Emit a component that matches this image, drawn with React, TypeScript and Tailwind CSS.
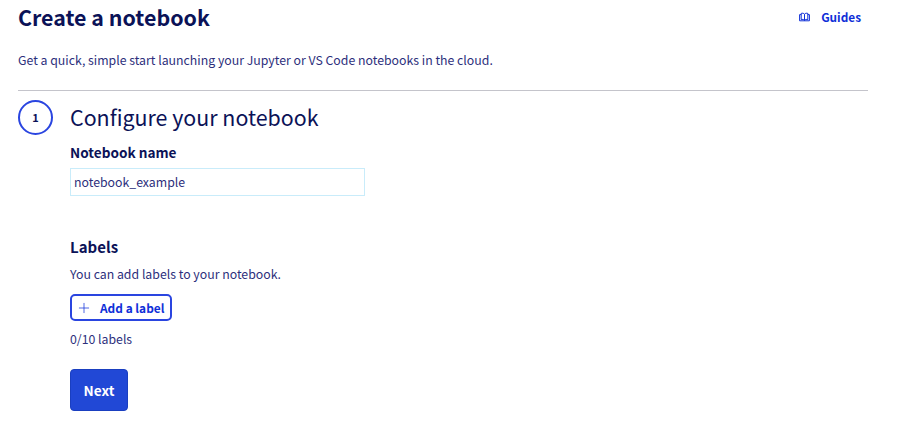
import { Plus } from "lucide-react";

const font = { fontFamily: '"Noto Sans CJK SC", "Noto Sans", sans-serif' };

function BookIcon() {
  return (
    <svg width="11" height="10" viewBox="0 0 11 10" fill="none" stroke="#0f2fd8" strokeWidth="1">
      <path d="M5.5 2.2C4.8 1.2 3.4 1 2.2 1.4V7.6C3.4 7.2 4.8 7.4 5.5 8.4C6.2 7.4 7.6 7.2 8.8 7.6V1.4C7.6 1 6.2 1.2 5.5 2.2ZM5.5 2.2V8.4" />
      <path d="M2.2 2.6H.6V8.8H10.4V2.6H8.8" />
    </svg>
  );
}

export default function App() {
  return (
    <div style={font} className="h-[422px] w-[900px] overflow-hidden bg-white pl-[18px] pr-[32px] text-[12.3px] text-[#2d2f7c]">
      <header className="flex items-start justify-between pt-[3px]">
        <h1 className="text-[21.4px] leading-[28px] font-bold text-[#0b1257]">Create a notebook</h1>
        <a className="mt-[5px] mr-[7px] flex items-center gap-[11px] text-[11.8px] leading-[17px] font-semibold text-[#0f2fd8]">
          <BookIcon />
          Guides
        </a>
      </header>

      <p className="mt-[20px] leading-[18px]">
        Get a quick, simple start launching your Jupyter or VS Code notebooks in the cloud.
      </p>

      <div className="mt-[21px] h-px bg-[#c4c4cb]" />

      <section className="mt-[9px] flex gap-[17px]">
        <div className="flex h-[35px] w-[35px] shrink-0 items-center justify-center rounded-full border-2 border-[#2a45e0] text-[11px] font-bold text-[#0b1257]">
          1
        </div>
        <div className="flex-1">
          <h2 className="text-[21.4px] leading-[34px] font-normal text-[#0b1257]">Configure your notebook</h2>
          <label className="mt-[9px] block text-[13.6px] leading-[18px] font-bold text-[#0b1257]">Notebook name</label>
          <input
            readOnly
            value="notebook_example"
            style={font}
            className="mt-[7px] block h-[28px] w-[295px] border border-[#c9ecfa] bg-white px-[3px] text-[12.3px] text-[#2d2f7c] outline-none"
          />

          <h3 className="mt-[41px] text-[15px] leading-[20px] font-bold text-[#0b1257]">Labels</h3>
          <p className="mt-[8px] leading-[18px]">You can add labels to your notebook.</p>
          <button className="mt-[11px] flex h-[27px] w-[102px] items-center rounded-[5px] border-2 border-[#2a45e0] bg-white pl-[4px] text-[11.9px] font-semibold text-[#0f2fd8]">
            <Plus size={16} strokeWidth={1.1} />
            <span className="ml-[8px]">Add a label</span>
          </button>
          <p className="mt-[9px] leading-[18px]">0/10 labels</p>
          <button className="mt-[21px] h-[42px] w-[58px] rounded-[4px] border border-[#1a3fc0] bg-[#2148d6] text-[13.6px] font-bold text-white">
            Next
          </button>
        </div>
      </section>
    </div>
  );
}
